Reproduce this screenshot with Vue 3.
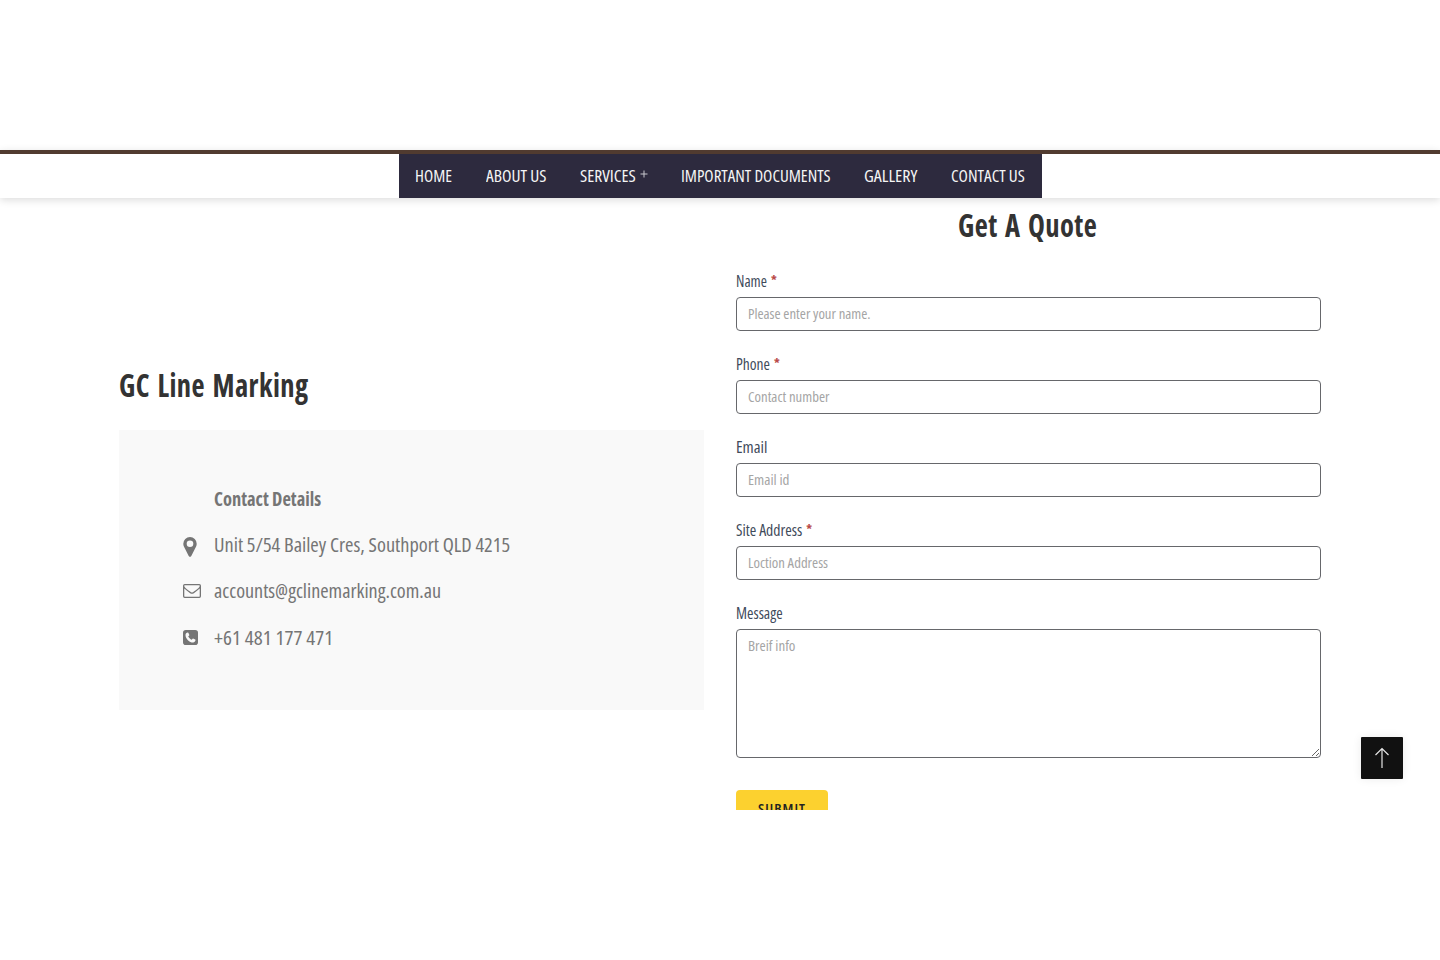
<template>
  <div class="page">
    <header class="header">
      <nav class="nav">
        <a v-for="item in menu" :key="item.label" href="#" class="nav-link">
          <span v-fit="item.width">{{ item.label }}</span>
          <svg v-if="item.children" class="plus" viewBox="0 0 8 8">
            <path d="M4 0.5v7M0.5 4h7" />
          </svg>
        </a>
      </nav>
    </header>

    <main class="content">
      <section class="contact">
        <h2 class="title"><span v-fit="190">GC Line Marking</span></h2>
        <ul class="details">
          <li class="detail heading">
            <strong v-fit="107">Contact Details</strong>
          </li>
          <li v-for="detail in details" :key="detail.text" class="detail">
            <svg
              class="detail-icon"
              :class="detail.icon"
              :viewBox="icons[detail.icon].viewBox"
            >
              <path :d="icons[detail.icon].path" fill-rule="evenodd" />
            </svg>
            <span v-fit="detail.width">{{ detail.text }}</span>
          </li>
        </ul>
      </section>

      <form class="quote" @submit.prevent>
        <h2 class="title quote-title"><span v-fit="139">Get A Quote</span></h2>

        <div v-for="field in fields" :key="field.id" class="form-group">
          <label :for="field.id" class="form-label">
            <span v-fit="field.labelWidth">{{ field.label }}</span>
            <span v-if="field.required" class="required">*</span>
          </label>
          <div class="control" :class="{ tall: field.multiline }">
            <textarea
              v-if="field.multiline"
              :id="field.id"
              v-model="form[field.id]"
              class="form-input"
            ></textarea>
            <input
              v-else
              :id="field.id"
              v-model="form[field.id]"
              class="form-input"
              type="text"
            />
            <span v-show="!form[field.id]" class="hint">
              <span v-fit="field.hintWidth">{{ field.hint }}</span>
            </span>
          </div>
        </div>

        <button type="submit" class="submit"><span v-fit="48">SUBMIT</span></button>
      </form>
    </main>

    <a href="#" class="to-top" aria-label="Back to top">
      <svg viewBox="0 0 16 22">
        <path d="M8 21V1.5M1.5 8L8 1.5L14.5 8" />
      </svg>
    </a>
  </div>
</template>

<script setup>
import { reactive } from 'vue'

// Condenses a piece of text horizontally to the given width
const vFit = (el, { value }) => {
  el.style.display = 'inline-block'
  el.style.whiteSpace = 'nowrap'
  el.style.transformOrigin = '0 50%'
  const natural = el.offsetWidth
  if (!natural) return
  el.style.transform = `scaleX(${value / natural})`
  el.style.marginRight = `${value - natural}px`
}

const menu = [
  { label: 'HOME', width: 37 },
  { label: 'ABOUT US', width: 61 },
  { label: 'SERVICES', width: 56, children: true },
  { label: 'IMPORTANT DOCUMENTS', width: 150 },
  { label: 'GALLERY', width: 53 },
  { label: 'CONTACT US', width: 74 }
]

const details = [
  { icon: 'pin', text: 'Unit 5/54 Bailey Cres, Southport QLD 4215', width: 296 },
  { icon: 'mail', text: 'accounts@gclinemarking.com.au', width: 227 },
  { icon: 'phone', text: '+61 481 177 471', width: 119 }
]

const icons = {
  pin: {
    viewBox: '0 0 14 20',
    path: 'M7 0a6.7 6.7 0 0 1 6.7 6.7c0 1-.2 1.9-.6 2.7L8.3 19.1a1.45 1.45 0 0 1-2.6 0L.9 9.4A6.3 6.3 0 0 1 .3 6.7 6.7 6.7 0 0 1 7 0zm0 3.4a3.3 3.3 0 1 0 0 6.6 3.3 3.3 0 0 0 0-6.6z'
  },
  mail: {
    viewBox: '0 0 18 14',
    path: 'M1.7 0h14.6A1.7 1.7 0 0 1 18 1.7v10.6a1.7 1.7 0 0 1-1.7 1.7H1.7A1.7 1.7 0 0 1 0 12.3V1.7A1.7 1.7 0 0 1 1.7 0zM1.3 4.4v7.9c0 .2.2.4.4.4h14.6c.2 0 .4-.2.4-.4V4.4c-1.8 1.7-3.6 3-5.2 4.3-.7.5-1.5 1.1-2.5 1.1s-1.8-.6-2.5-1.1C4.9 7.4 3.1 6.1 1.3 4.4zM1.7 1.3c-.6 0-.4.8-.2 1.4.9 1.6 3.7 3.3 5.6 4.9.6.5 1.2.9 1.9.9s1.3-.4 1.9-.9c1.9-1.6 4.7-3.3 5.6-4.9.2-.6.4-1.4-.2-1.4z'
  },
  phone: {
    viewBox: '0 0 15 15',
    path: 'M2.8 0h9.4A2.8 2.8 0 0 1 15 2.8v9.4a2.8 2.8 0 0 1-2.8 2.8H2.8A2.8 2.8 0 0 1 0 12.2V2.8A2.8 2.8 0 0 1 2.8 0zM4.7 2.5C3.5 2.8 2.5 3.7 2.5 4.9c0 3.7 4 7.6 7.6 7.6 1.2 0 2.2-1.1 2.4-2.3 0-.3 0-.4-.3-.6L10.1 8.5c-.5-.2-.9.9-1.4 1.2C7.3 9.3 5.7 7.7 5.2 6.3c.3-.5 1.4-.9 1.2-1.4L5.3 2.8c-.2-.3-.3-.3-.6-.3z'
  }
}

const fields = [
  { id: 'name', label: 'Name', labelWidth: 31, hint: 'Please enter your name.', hintWidth: 123, required: true },
  { id: 'phone', label: 'Phone', labelWidth: 34, hint: 'Contact number', hintWidth: 81, required: true },
  { id: 'email', label: 'Email', labelWidth: 31, hint: 'Email id', hintWidth: 41 },
  { id: 'address', label: 'Site Address', labelWidth: 66, hint: 'Loction Address', hintWidth: 80, required: true },
  { id: 'message', label: 'Message', labelWidth: 47, hint: 'Breif info', hintWidth: 47, multiline: true }
]

const form = reactive({ name: '', phone: '', email: '', address: '', message: '' })
</script>

<style>
body {
  margin: 0;
  background: #fff;
}
</style>

<style scoped>
.page {
  height: 810px;
  overflow: hidden;
  box-sizing: border-box;
  padding-top: 150px;
  position: relative;
  font-family: "Open Sans", "Noto Sans", sans-serif;
  font-stretch: 75%;
  color: #757575;
}

.header {
  display: flex;
  justify-content: center;
  height: 44px;
  border-top: 4px solid #513b30;
  background: #fff;
  box-shadow: 0 2px 8px rgba(0, 0, 0, 0.14);
}

.nav {
  display: flex;
  width: 643px;
  justify-content: center;
  background: #2d2a3e;
}

.nav-link {
  display: flex;
  align-items: center;
  padding: 0 16.7px 1px;
  color: #f5f5f5;
  font-size: 16px;
  text-decoration: none;
}

.plus {
  width: 8px;
  height: 8px;
  margin: -4px 0 0 4.5px;
  stroke: #c8c7cd;
  fill: none;
}

.content {
  display: grid;
  grid-template-columns: 585px 585px;
  gap: 32px;
  width: 1202px;
  margin: 0 auto;
}

.title {
  margin: 0;
  font-size: 32px;
  line-height: 40px;
  font-weight: 700;
  letter-spacing: 0.5px;
  word-spacing: 2px;
  color: #333;
}

.contact {
  padding-top: 167px;
}

.details {
  display: flex;
  flex-direction: column;
  gap: 18.5px;
  box-sizing: border-box;
  height: 280px;
  margin: 25px 0 0;
  padding: 54px 64px 0;
  list-style: none;
  background: #f9f9f9;
}

.detail {
  display: grid;
  grid-template-columns: 31px 1fr;
  align-items: center;
  height: 28px;
  font-size: 20px;
  line-height: 28px;
}

.detail.heading {
  padding-top: 1px;
  margin-bottom: -1px;
}

.detail > span,
.detail > strong {
  grid-column: 2;
  justify-self: start;
}

.detail-icon {
  fill: #757575;
}

.pin {
  width: 14px;
  height: 20px;
  margin-top: 4px;
}

.mail {
  width: 18px;
  height: 14px;
}

.phone {
  width: 15px;
  height: 15px;
  margin-top: -1px;
}

.quote {
  padding-top: 7px;
}

.quote-title {
  padding-right: 1px;
  text-align: center;
  margin-bottom: 26px;
}

.form-group {
  height: 60px;
  margin-bottom: 22.9px;
}

.form-label {
  display: flex;
  gap: 4px;
  height: 22px;
  margin-bottom: 4px;
  font-size: 15.5px;
  line-height: 21px;
  color: #3f4b5b;
}

.required {
  color: #b94a48;
  font-size: 13px;
  font-weight: 700;
  line-height: 19px;
}

.control {
  display: grid;
  grid-template-rows: 100%;
  height: 34px;
}

.control.tall {
  height: 129.5px;
}

.form-input,
.hint {
  grid-area: 1 / 1;
}

.form-input {
  box-sizing: border-box;
  width: 100%;
  height: 100%;
  margin: 0;
  padding: 6px 11px;
  border: 1px solid #66676b;
  border-radius: 4px;
  background: #fff;
  font: inherit;
  outline: none;
}

.hint {
  padding-left: 11.5px;
  font-size: 14px;
  line-height: 34px;
  color: #a5a5a5;
  pointer-events: none;
}

.form-group:last-of-type {
  height: 155.5px;
  margin-bottom: 32px;
}

.submit {
  display: block;
  width: 92px;
  height: 42px;
  padding: 0 0 4px;
  border: 0;
  border-radius: 4px;
  background: #fcd12f;
  color: #222;
  font: inherit;
  font-size: 14px;
  line-height: 18px;
  font-weight: 600;
  letter-spacing: 1px;
}

.to-top {
  position: absolute;
  top: 737px;
  left: 1361px;
  display: flex;
  align-items: center;
  justify-content: center;
  width: 42px;
  height: 42px;
  border-radius: 1px;
  background: #111;
  box-shadow: 0 0 10px rgba(0, 0, 0, 0.08);
}

.to-top svg {
  width: 16px;
  height: 22px;
  fill: none;
  stroke: #e5e5e5;
  stroke-width: 1.2;
}
</style>
